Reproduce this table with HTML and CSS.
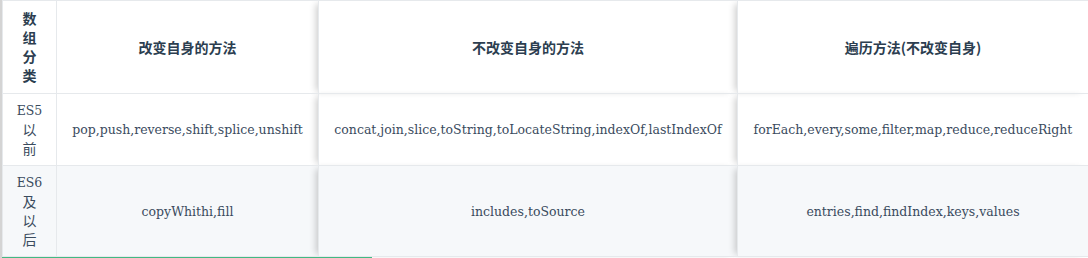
FILE: index.html
```html
<!DOCTYPE html>
<html lang="zh-CN">
<head>
<meta charset="utf-8">
<link rel="stylesheet" href="styles.css">
</head>
<body>
<div class="page">
  <table class="methods">
    <colgroup>
      <col class="c1"><col class="c2"><col class="c3"><col class="c4">
    </colgroup>
    <thead>
      <tr>
        <th>数组分类</th>
        <th>改变自身的方法</th>
        <th class="raised">不改变自身的方法</th>
        <th class="raised">遍历方法(不改变自身)</th>
      </tr>
    </thead>
    <tbody>
      <tr>
        <td class="cat"><span class="ln">ES5</span><span class="ln cjk">以</span><span class="ln cjk">前</span></td>
        <td>pop,push,reverse,shift,splice,unshift</td>
        <td class="raised">concat,join,slice,toString,toLocateString,indexOf,lastIndexOf</td>
        <td class="raised">forEach,every,some,filter,map,reduce,reduceRight</td>
      </tr>
      <tr class="alt">
        <td class="cat"><span class="ln">ES6</span><span class="ln cjk">及</span><span class="ln cjk">以</span><span class="ln cjk">后</span></td>
        <td>copyWhithi,fill</td>
        <td class="raised">includes,toSource</td>
        <td class="raised">entries,find,findIndex,keys,values</td>
      </tr>
    </tbody>
  </table>
  <div class="progress"></div>
</div>
</body>
</html>
```
FILE: styles.css
```css
html, body {
  margin: 0;
  padding: 0;
  background: #ffffff;
}
.page {
  width: 1088px;
  height: 258px;
  overflow: hidden;
  border-left: 2px solid #d4d4d4;
  box-sizing: border-box;
}
.methods {
  border-collapse: collapse;
  table-layout: fixed;
  width: 1086px;
  color: #3a4b5e;
}
.c1 { width: 54px; }
.c2 { width: 262px; }
.c3 { width: 419px; }
.c4 { width: 351px; }
.methods th,
.methods td {
  border: 1px solid #e6e9ec;
  padding: 7px 12px;
  text-align: center;
  vertical-align: middle;
  line-height: 19px;
}
.methods th {
  font-family: "Noto Sans CJK SC", "Noto Sans", sans-serif;
  font-weight: bold;
  font-size: 14px;
  color: #2c3e50;
  padding: 8px 12px;
}
.methods td {
  font-family: "DejaVu Serif", "Noto Sans CJK SC", serif;
  font-size: 12.5px;
}
.methods th:first-child {
  padding: 8px 14px;
}
.methods td.cat {
  padding: 7px 4px;
}
.ln {
  display: block;
  height: 19px;
}
.ln.cjk {
  font-family: "Noto Sans CJK SC", sans-serif;
  font-size: 14px;
  line-height: 19px;
}
.methods tr.alt td {
  background: #f6f8fa;
}
.methods .raised {
  box-shadow: -6px 0 7px -3px rgba(0, 0, 0, 0.2);
}
.progress {
  width: 370px;
  height: 2px;
  background: #42b983;
}
```
